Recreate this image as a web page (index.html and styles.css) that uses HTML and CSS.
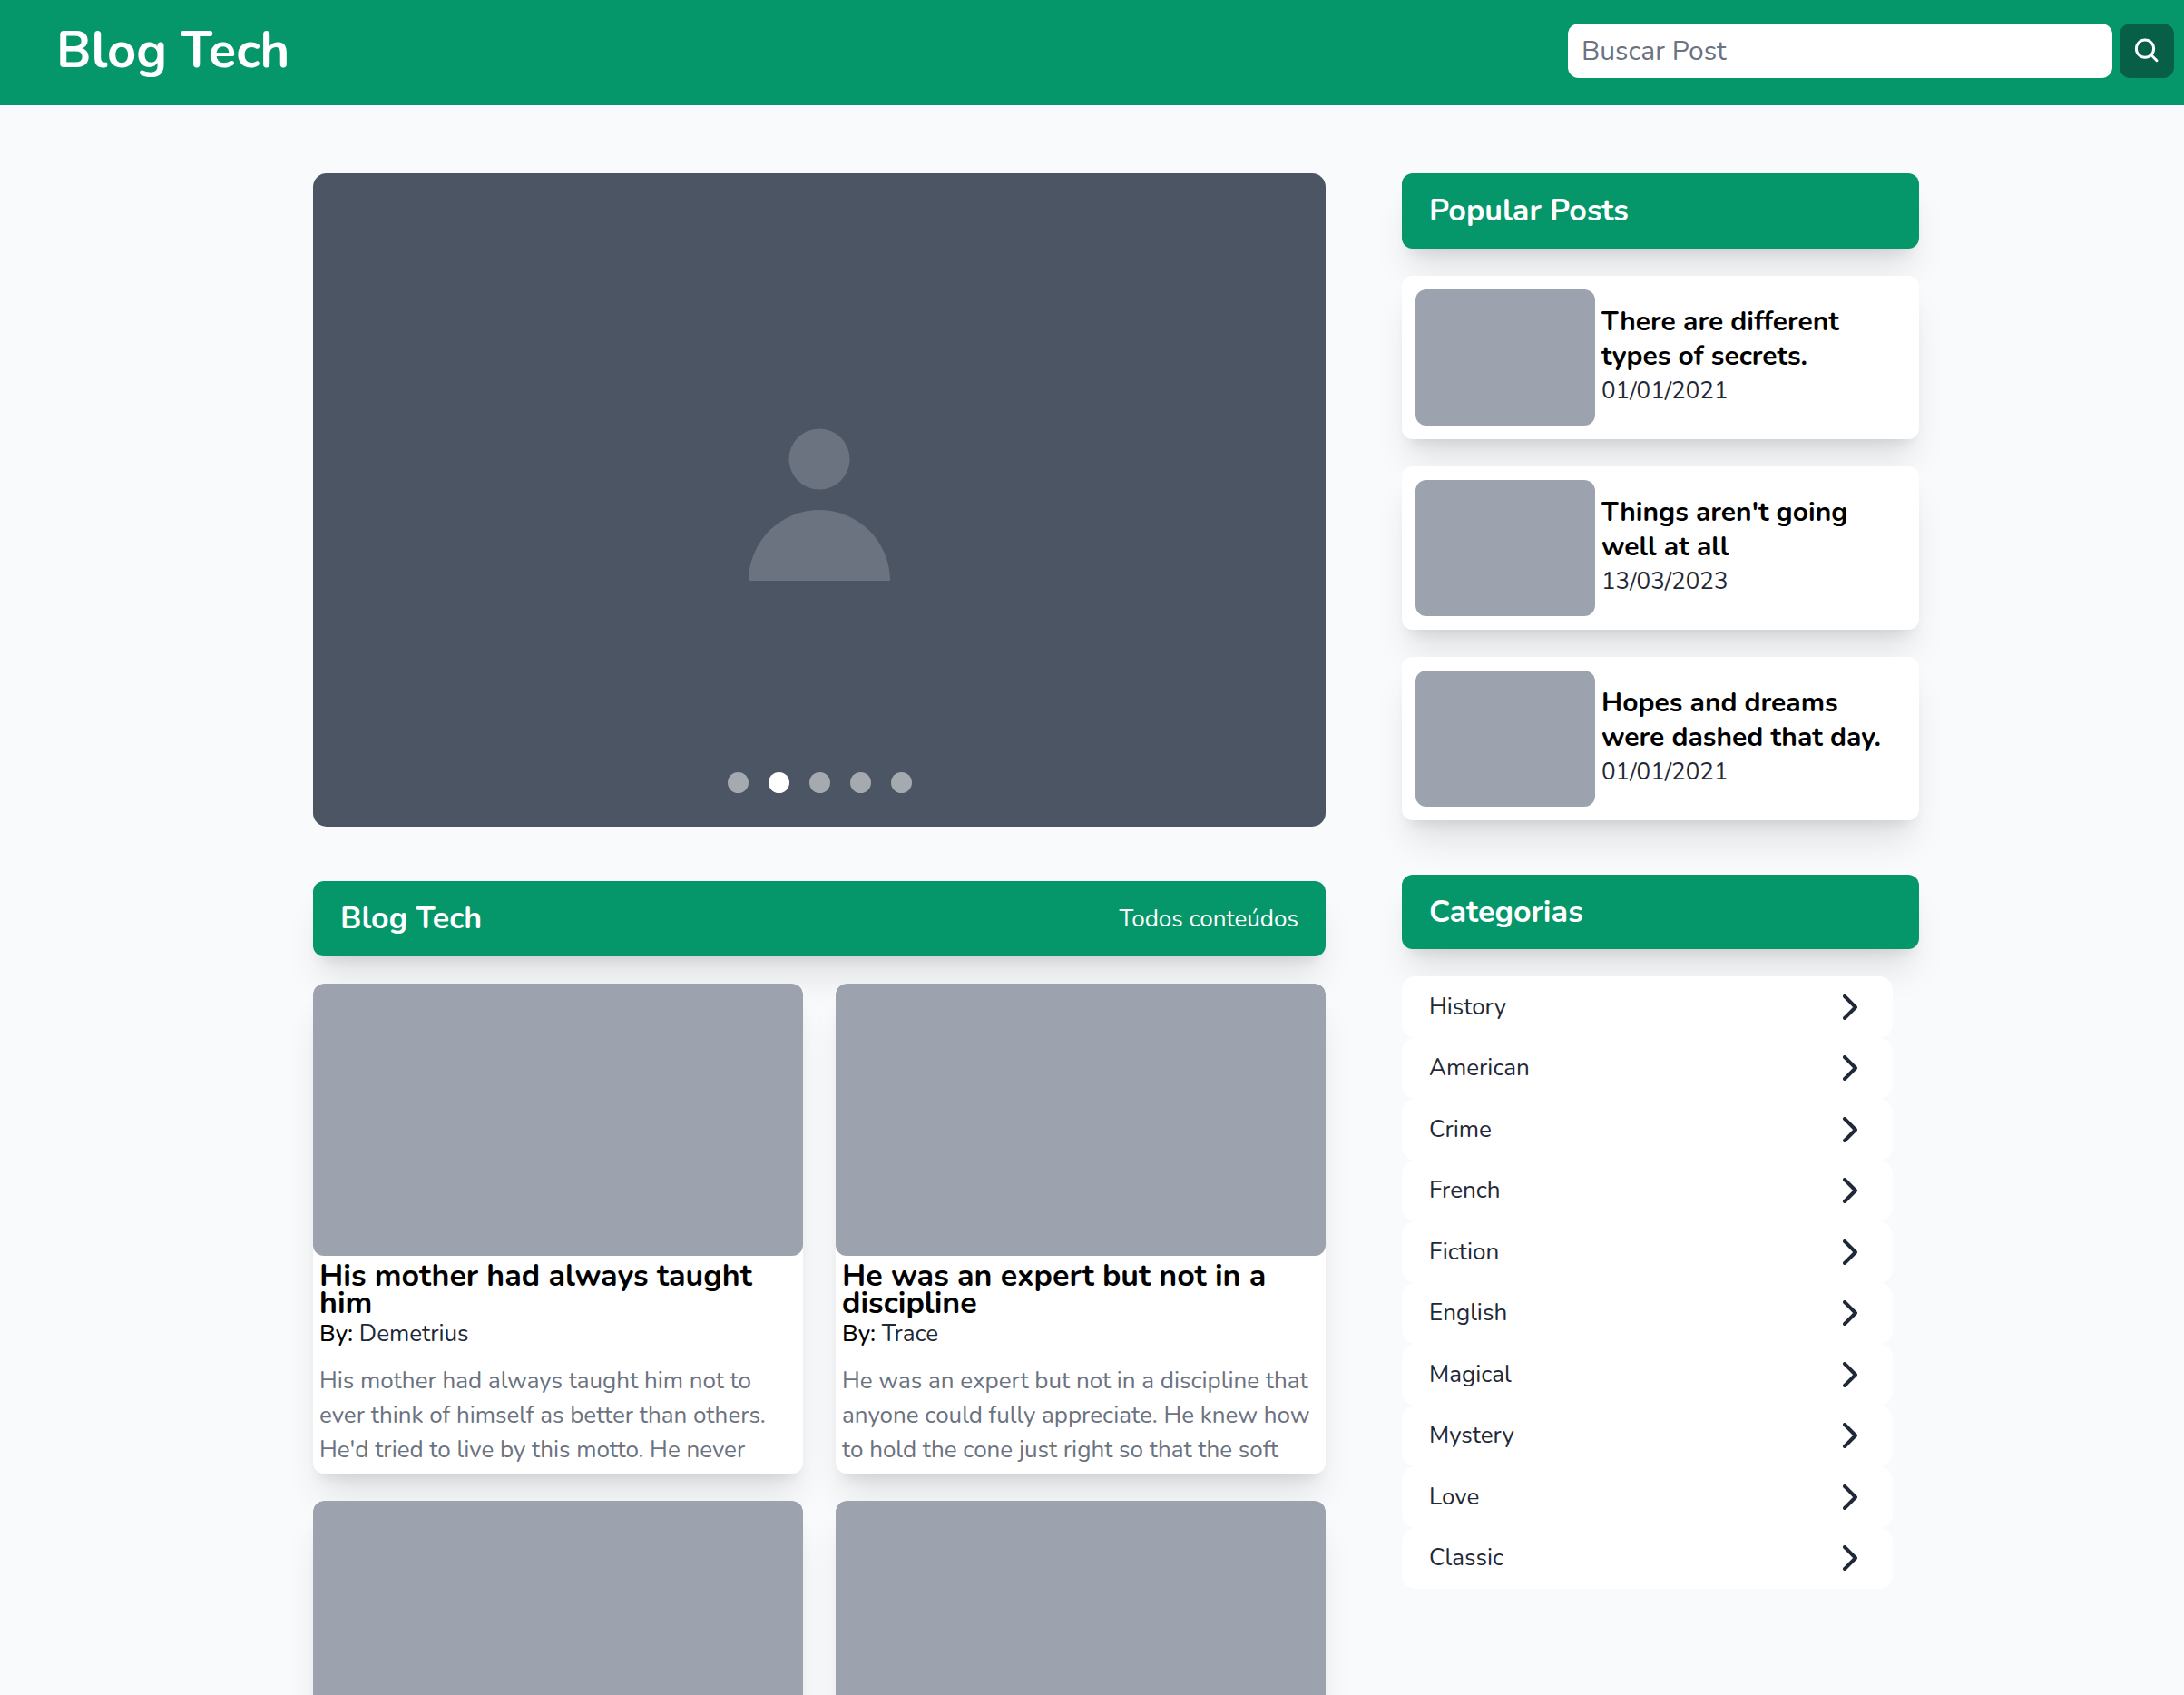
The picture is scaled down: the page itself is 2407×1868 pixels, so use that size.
FILE: index.html
```html
<!DOCTYPE html>
<html lang="pt-BR">
<head>
<meta charset="utf-8">
<meta name="viewport" content="width=device-width, initial-scale=1">
<title>Blog Tech</title>
<link rel="stylesheet" href="styles.css">
</head>
<body>
<header class="topbar">
  <h1 class="brand">Blog Tech</h1>
  <form class="search" role="search">
    <input class="search-input" type="search" placeholder="Buscar Post" aria-label="Buscar Post">
    <button class="search-button" type="submit" aria-label="Buscar">
      <svg class="search-icon" viewBox="0 0 30 30" aria-hidden="true"><circle cx="13" cy="12.700" r="9.600"/><path d="M20 19.700L26 25.700"/></svg>
    </button>
  </form>
</header>

<main class="page">
  <div class="content">
    <section class="carousel" aria-label="Destaques">
      <svg class="avatar" viewBox="0 0 156 168" aria-hidden="true"><circle cx="78" cy="34" r="33.500"/><path d="M0 168a78 78 0 0 1 156 0z"/></svg>
      <div class="dots">
        <button class="dot" type="button" aria-label="Slide 1"></button>
        <button class="dot dot-active" type="button" aria-label="Slide 2"></button>
        <button class="dot" type="button" aria-label="Slide 3"></button>
        <button class="dot" type="button" aria-label="Slide 4"></button>
        <button class="dot" type="button" aria-label="Slide 5"></button>
      </div>
    </section>

    <section class="posts">
      <div class="bar">
        <h2 class="bar-title">Blog Tech</h2>
        <a class="bar-link" href="#">Todos conteúdos</a>
      </div>
      <div class="cards">
        <article class="card">
          <div class="card-image"></div>
          <div class="card-body">
            <h3 class="card-title">His mother had always taught him</h3>
            <p class="card-author"><span class="by">By:</span> Demetrius</p>
            <p class="card-text">His mother had always taught him not to ever think of himself as better than others. He'd tried to live by this motto. He never</p>
          </div>
        </article>
        <article class="card">
          <div class="card-image"></div>
          <div class="card-body">
            <h3 class="card-title">He was an expert but not in a discipline</h3>
            <p class="card-author"><span class="by">By:</span> Trace</p>
            <p class="card-text">He was an expert but not in a discipline that anyone could fully appreciate. He knew how to hold the cone just right so that the soft</p>
          </div>
        </article>
        <article class="card"><div class="card-image"></div></article>
        <article class="card"><div class="card-image"></div></article>
      </div>
    </section>
  </div>

  <aside class="sidebar">
    <section class="popular">
      <div class="bar"><h2 class="bar-title">Popular Posts</h2></div>
      <article class="mini">
        <div class="mini-image"></div>
        <div class="mini-body"><h3 class="mini-title">There are different types of secrets.</h3><p class="mini-date">01/01/2021</p></div>
      </article>
      <article class="mini">
        <div class="mini-image"></div>
        <div class="mini-body"><h3 class="mini-title">Things aren't going well at all</h3><p class="mini-date">13/03/2023</p></div>
      </article>
      <article class="mini">
        <div class="mini-image"></div>
        <div class="mini-body"><h3 class="mini-title">Hopes and dreams were dashed that day.</h3><p class="mini-date">01/01/2021</p></div>
      </article>
    </section>

    <section class="categories">
      <div class="bar bar-short"><h2 class="bar-title">Categorias</h2></div>
      <ul class="category-list">
        <li><a class="category" href="#">History<svg class="chevron" viewBox="0 0 16 28" aria-hidden="true"><path d="M2 2l12 12L2 26"/></svg></a></li>
        <li><a class="category" href="#">American<svg class="chevron" viewBox="0 0 16 28" aria-hidden="true"><path d="M2 2l12 12L2 26"/></svg></a></li>
        <li><a class="category" href="#">Crime<svg class="chevron" viewBox="0 0 16 28" aria-hidden="true"><path d="M2 2l12 12L2 26"/></svg></a></li>
        <li><a class="category" href="#">French<svg class="chevron" viewBox="0 0 16 28" aria-hidden="true"><path d="M2 2l12 12L2 26"/></svg></a></li>
        <li><a class="category" href="#">Fiction<svg class="chevron" viewBox="0 0 16 28" aria-hidden="true"><path d="M2 2l12 12L2 26"/></svg></a></li>
        <li><a class="category" href="#">English<svg class="chevron" viewBox="0 0 16 28" aria-hidden="true"><path d="M2 2l12 12L2 26"/></svg></a></li>
        <li><a class="category" href="#">Magical<svg class="chevron" viewBox="0 0 16 28" aria-hidden="true"><path d="M2 2l12 12L2 26"/></svg></a></li>
        <li><a class="category" href="#">Mystery<svg class="chevron" viewBox="0 0 16 28" aria-hidden="true"><path d="M2 2l12 12L2 26"/></svg></a></li>
        <li><a class="category" href="#">Love<svg class="chevron" viewBox="0 0 16 28" aria-hidden="true"><path d="M2 2l12 12L2 26"/></svg></a></li>
        <li><a class="category" href="#">Classic<svg class="chevron" viewBox="0 0 16 28" aria-hidden="true"><path d="M2 2l12 12L2 26"/></svg></a></li>
      </ul>
    </section>
  </aside>
</main>
</body>
</html>
```
FILE: styles.css
```css
* {
  box-sizing: border-box;
  margin: 0;
  padding: 0;
}

body {
  height: 100vh;
  overflow: hidden;
  background: #f9fafc;
  color: #1f2937;
  font-family: Nunito, "Open Sans", sans-serif;
  font-size: 26px;
  line-height: 38px;
}

a {
  color: inherit;
  text-decoration: none;
}

button {
  border: 0;
  cursor: pointer;
}

.topbar {
  display: flex;
  justify-content: space-between;
  align-items: flex-start;
  padding: 26px 11px 30px 62px;
  background: #059669;
}

.brand {
  color: #fff;
  font-size: 56px;
  font-weight: 700;
  line-height: 60px;
}

.search {
  display: flex;
  gap: 8px;
}

.search-input {
  width: 600px;
  height: 60px;
  padding: 0 15px;
  border: 0;
  border-radius: 12px;
  background: #fff;
  font: inherit;
  font-size: 30px;
  appearance: none;
}

.search-input::placeholder {
  color: #6b7280;
  opacity: 1;
}

.search-button {
  display: grid;
  place-items: center;
  width: 60px;
  height: 60px;
  border-radius: 12px;
  background: #065f46;
}

.search-icon {
  width: 30px;
  height: 30px;
  fill: none;
  stroke: #fff;
  stroke-width: 3;
  stroke-linecap: round;
}

.page {
  display: grid;
  grid-template-columns: minmax(0, 1fr) 570px;
  gap: 84px;
  max-width: 1921px;
  margin: 0 auto;
  padding: 75px 49px 60px 102px;
}

.content,
.sidebar {
  display: flex;
  flex-direction: column;
  gap: 60px;
}

.carousel {
  position: relative;
  display: grid;
  place-items: center;
  height: 720px;
  border-radius: 15px;
  background: #4b5563;
}

.avatar {
  width: 156px;
  height: 168px;
  margin-top: 10px;
  fill: #6b7280;
}

.dots {
  position: absolute;
  right: 0;
  bottom: 37px;
  left: 0;
  display: flex;
  justify-content: center;
  gap: 22px;
}

.dot {
  width: 23px;
  height: 23px;
  border-radius: 50%;
  background: #a5aab1;
}

.dot-active {
  background: #fff;
}

.bar,
.card,
.mini {
  border-radius: 12px;
  box-shadow: 0 30px 38px -8px rgb(0 0 0 / 0.1), 0 12px 15px -9px rgb(0 0 0 / 0.1);
}

.bar {
  display: flex;
  justify-content: space-between;
  align-items: center;
  padding: 20px 30px;
  background: #059669;
  color: #fff;
}

.bar-title {
  font-size: 34px;
  font-weight: 700;
  line-height: 43px;
}

.bar-short .bar-title {
  line-height: 42px;
}

.posts,
.popular,
.categories {
  display: flex;
  flex-direction: column;
  gap: 30px;
}

.cards {
  display: grid;
  grid-template-columns: 1fr 1fr;
  gap: 30px 36px;
}

.card {
  height: 540px;
  overflow: hidden;
  background: #fff;
}

.card-image {
  height: 300px;
  border-radius: 12px;
  background: #9ca3af;
}

.card-body {
  padding: 7px;
}

.card-title {
  color: #000;
  font-size: 34px;
  font-weight: 700;
  line-height: 30px;
}

.by {
  color: #000;
  font-weight: 500;
}

.card-text {
  margin-top: 14px;
  color: #6b7280;
}

.mini {
  display: flex;
  align-items: center;
  gap: 7px;
  height: 180px;
  padding: 15px;
  background: #fff;
}

.mini-image {
  flex: none;
  width: 198px;
  height: 150px;
  border-radius: 12px;
  background: #9ca3af;
}

.mini-body {
  padding-bottom: 2px;
}

.mini-title {
  color: #000;
  font-size: 30px;
  font-weight: 700;
}

.category-list {
  display: grid;
  grid-auto-rows: 1fr;
  height: 675px;
  margin-right: 29px;
  list-style: none;
}

.category {
  display: flex;
  justify-content: space-between;
  align-items: center;
  height: 100%;
  padding: 0 39px 0 30px;
  border-radius: 15px;
  background: #fff;
}

.chevron {
  width: 16px;
  height: 28px;
  fill: none;
  stroke: #1f2937;
  stroke-width: 4;
  stroke-linecap: round;
  stroke-linejoin: round;
}
```
